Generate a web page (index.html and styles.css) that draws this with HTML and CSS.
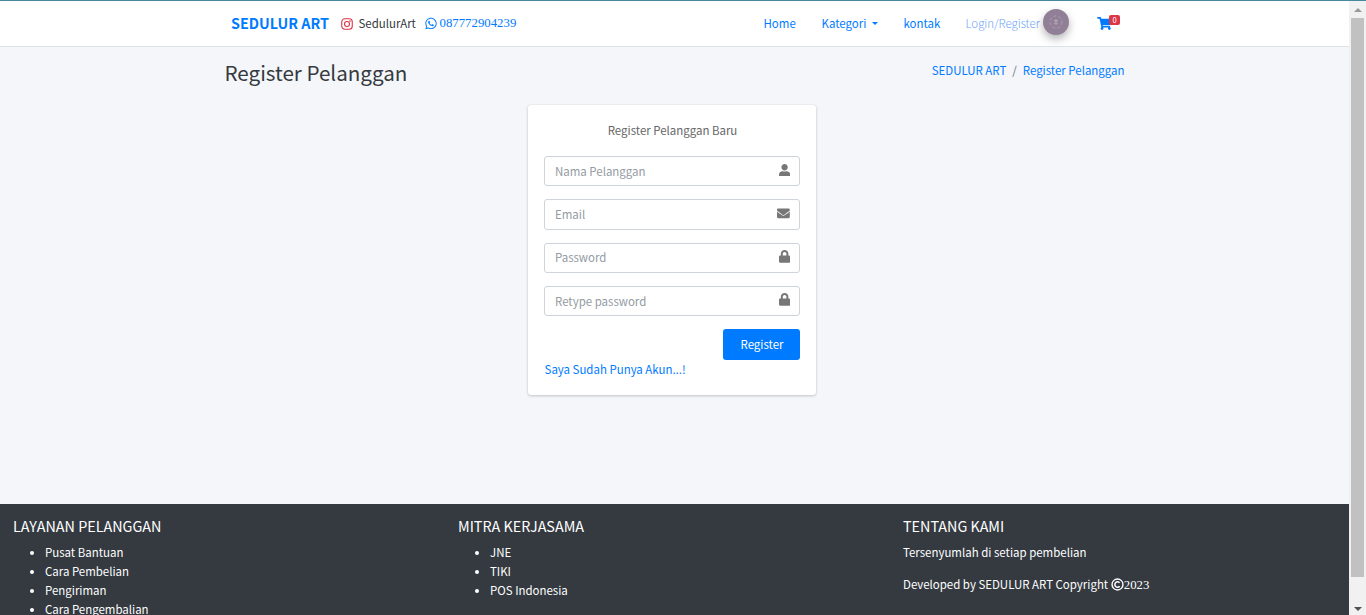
FILE: index.html
```html
<!DOCTYPE html>
<html lang="id">
<head>
<meta charset="utf-8">
<title>Register Pelanggan</title>
<link rel="stylesheet" href="styles.css">
</head>
<body>
<div class="page">
  <header class="navbar">
    <div class="container nav-row">
      <a class="brand">SEDULUR ART</a>
      <svg class="ig" viewBox="0 0 24 24" fill="none" stroke="#dc3545" stroke-width="2.2"><rect x="1.5" y="1.5" width="21" height="21" rx="6"/><circle cx="12" cy="12" r="5"/><circle cx="18" cy="6" r="1" fill="#dc3545" stroke-width="1"/></svg>
      <span class="handle">SedulurArt</span>
      <a class="phone"><svg class="wa" viewBox="0 0 448 512" fill="currentColor"><path d="M380.9 97.1C339 55.1 283.2 32 223.9 32c-122.400 0-222 99.600-222 222 0 39.100 10.200 77.300 29.600 111L0 480l117.700-30.900c32.400 17.700 68.900 27 106.100 27h.1c122.300 0 224.100-99.600 224.100-222 0-59.300-25.200-115-67.100-157zm-157 341.600c-33.200 0-65.700-8.900-94-25.700l-6.700-4-69.800 18.300L72 359.200l-4.400-7c-18.500-29.400-28.200-63.300-28.200-98.200 0-101.700 82.800-184.500 184.600-184.500 49.300 0 95.600 19.200 130.400 54.100 34.800 34.900 56.200 81.200 56.100 130.500 0 101.800-84.900 184.600-186.600 184.600zm101.200-138.200c-5.500-2.800-32.800-16.200-37.900-18-5.100-1.900-8.800-2.800-12.500 2.800-3.700 5.600-14.300 18-17.600 21.800-3.200 3.700-6.500 4.200-12 1.400-32.600-16.300-54-29.100-75.500-66-5.700-9.800 5.700-9.100 16.300-30.300 1.800-3.700.9-6.900-.5-9.700-1.400-2.800-12.500-30.100-17.100-41.200-4.500-10.800-9.100-9.300-12.500-9.500-3.200-.2-6.900-.2-10.600-.2-3.700 0-9.700 1.400-14.800 6.900-5.100 5.600-19.400 19-19.400 46.300 0 27.300 19.900 53.700 22.600 57.400 2.800 3.700 39.100 59.700 94.800 83.800 35.200 15.200 49 16.500 66.600 13.900 10.700-1.600 32.800-13.400 37.400-26.400 4.600-13 4.600-24.100 3.200-26.400-1.300-2.500-5-3.900-10.500-6.600z"/></svg><span>087772904239</span></a>
      <nav class="menu">
        <a>Home</a>
        <a class="drop">Kategori<i class="caret"></i></a>
        <a>kontak</a>
        <a class="login">Login/Register</a>
        <span class="avatar"><svg viewBox="0 0 26 26" fill="none" stroke="#b5a6ba"><circle cx="13" cy="13" r="6" stroke-dasharray="3 2" stroke-width=".7"/><path d="M11 11.500h4M13 10v6M11 15l2-2 2 2" stroke-width="1"/></svg></span>
        <a class="cart"><svg viewBox="0 0 576 512" fill="currentColor"><path d="M528.100 301.300l47.300-208C578.800 78.300 567.400 64 552 64H159.200l-9.200-44.800C147.800 8 137.900 0 126.500 0H24C10.700 0 0 10.700 0 24v16c0 13.300 10.700 24 24 24h69.900l70.200 343.400C147.300 417.100 136 435.200 136 456c0 30.900 25.100 56 56 56s56-25.100 56-56c0-15.700-6.400-29.800-16.800-40h209.600C430.400 426.200 424 440.300 424 456c0 30.900 25.100 56 56 56s56-25.100 56-56c0-22.200-12.900-41.300-31.600-50.400l5.500-24.300c3.400-15-8-29.300-23.400-29.300H218.100l-6.500-32h293.100c11.200 0 20.900-7.800 23.400-18.700z"/></svg><span class="badge">0</span></a>
      </nav>
    </div>
  </header>

  <div class="container heading">
    <h1>Register Pelanggan</h1>
    <div class="crumbs"><a>SEDULUR ART</a><span>/</span><a>Register Pelanggan</a></div>
  </div>

  <main class="card">
    <p class="card-title">Register Pelanggan Baru</p>
    <div class="field"><span>Nama Pelanggan</span><svg class="i-user" viewBox="0 0 448 512"><path d="M224 256c70.700 0 128-57.300 128-128S294.700 0 224 0 96 57.300 96 128s57.300 128 128 128zm89.600 32h-16.700c-22.200 10.200-46.900 16-72.900 16s-50.600-5.800-72.900-16h-16.700C60.200 288 0 348.200 0 422.400V464c0 26.500 21.500 48 48 48h352c26.500 0 48-21.500 48-48v-41.600c0-74.200-60.200-134.400-134.400-134.400z"/></svg></div>
    <div class="field"><span>Email</span><svg class="i-mail" viewBox="0 0 512 512"><path d="M502.300 190.800c3.900-3.100 9.700-.2 9.700 4.700V400c0 26.500-21.500 48-48 48H48c-26.500 0-48-21.500-48-48V195.600c0-5 5.700-7.800 9.700-4.700 22.400 17.400 52.100 39.500 154.100 113.600 21.100 15.400 56.700 47.800 92.200 47.600 35.700.3 72-32.800 92.300-47.600 102-74.100 131.600-96.300 154-113.700zM256 320c23.200.4 56.600-29.200 73.400-41.400 132.700-96.300 142.800-104.700 173.400-128.700 5.800-4.500 9.200-11.500 9.200-18.900v-19c0-26.500-21.500-48-48-48H48c-26.500 0-48 21.500-48 48v19c0 7.400 3.400 14.300 9.200 18.900 30.600 23.900 40.700 32.400 173.400 128.700 16.800 12.200 50.200 41.800 73.400 41.400z"/></svg></div>
    <div class="field"><span>Password</span><svg class="i-lock" viewBox="0 0 448 512"><path d="M400 224h-24v-72C376 68.200 307.800 0 224 0S72 68.200 72 152v72H48c-26.500 0-48 21.500-48 48v192c0 26.500 21.500 48 48 48h352c26.500 0 48-21.500 48-48V272c0-26.500-21.500-48-48-48zm-104 0H152v-72c0-39.700 32.300-72 72-72s72 32.300 72 72v72z"/></svg></div>
    <div class="field"><span>Retype password</span><svg class="i-lock" viewBox="0 0 448 512"><path d="M400 224h-24v-72C376 68.200 307.800 0 224 0S72 68.200 72 152v72H48c-26.500 0-48 21.500-48 48v192c0 26.500 21.500 48 48 48h352c26.500 0 48-21.500 48-48V272c0-26.500-21.500-48-48-48zm-104 0H152v-72c0-39.700 32.300-72 72-72s72 32.300 72 72v72z"/></svg></div>
    <button class="submit">Register</button>
    <a class="have">Saya Sudah Punya Akun...!</a>
  </main>

  <footer class="footer">
    <section><h2>LAYANAN PELANGGAN</h2><ul><li>Pusat Bantuan</li><li>Cara Pembelian</li><li>Pengiriman</li><li>Cara Pengembalian</li></ul></section>
    <section><h2>MITRA KERJASAMA</h2><ul><li>JNE</li><li>TIKI</li><li>POS Indonesia</li></ul></section>
    <section><h2>TENTANG KAMI</h2><p>Tersenyumlah di setiap pembelian</p><p>Developed by SEDULUR ART Copyright <svg class="copy" viewBox="0 0 14 14" fill="none" stroke="#fff"><circle cx="7" cy="7" r="5.900" stroke-width="1.500"/><path d="M9.300 5.200A2.900 2.900 0 1 0 9.300 8.800" stroke-width="1.600"/></svg><span class="year">2023</span></p></section>
  </footer>
</div>
<div class="scrollbar"><i class="up"></i><i class="thumb"></i><i class="down"></i></div>
</body>
</html>
```

FILE: styles.css
```css
* { box-sizing: border-box; }
html, body { height: 100%; overflow: hidden; }
body {
  margin: 0;
  display: flex;
  border-top: 1px solid #44899c;
  background: #f4f6f9;
  color: #343a40;
  font: 11.46px/19px "Noto Sans CJK SC", "Noto Sans", sans-serif;
}
h1, h2, p, ul { margin: 0; padding: 0; font-weight: 400; }
a { color: #007bff; white-space: nowrap; }
svg { display: block; flex: none; }
.page { width: 1349px; height: 614px; display: flex; flex-direction: column; overflow: hidden; flex: none; }
.container { width: 912px; margin: 0 auto; padding: 0 6px; display: flex; }

.navbar { height: 46px; flex: none; background: #fff; border-bottom: 1px solid #dee2e6; }
.nav-row { height: 45px; align-items: center; }
.brand { width: 109px; padding-left: 6.600px; margin-top: -2px; font-size: 14.35px; font-weight: 700; }
.ig { width: 12px; height: 12px; margin-left: 7px; }
.handle { width: 66px; margin-left: 6px; color: #343a40; }
.phone { display: flex; align-items: center; gap: 3px; font-family: "Liberation Serif", serif; font-size: 12.8px; }
.wa { width: 12px; height: 13px; }
.menu { display: flex; align-items: center; margin-left: auto; width: 361px; flex: none; }
.menu > a:first-child { width: 58px; }
.menu .drop { width: 82px; display: flex; align-items: center; }
.menu > a:nth-child(3) { width: 62px; }
.caret { margin-left: 6px; border: 3.500px solid transparent; border-top-color: #007bff; border-bottom: 0; }
.menu .login { width: 77px; font-weight: 300; color: #6da3f8; }
.avatar { width: 26px; height: 26px; margin-top: -4px; border-radius: 50%; background: #917f98; box-shadow: 0 4px 8px rgba(0, 0, 0, .3); flex: none; }
.cart { position: relative; margin-left: 28.500px; }
.cart svg { width: 15px; height: 13px; }
.badge { position: absolute; left: 12px; top: -2px; width: 11px; height: 10px; border-radius: 2px; background: #dc3545; color: #fff; font-size: 7.5px; line-height: 10px; text-align: center; }

.heading { height: 58px; flex: none; justify-content: space-between; }
h1 { margin-top: 11px; font-size: 20.6px; line-height: 28px; }
.crumbs { display: flex; margin-top: 14px; }
.crumbs span { margin: 0 6px; color: #6c757d; }

.card { width: 288px; height: 290px; flex: none; margin-left: 528px; padding: 16px; display: flex; flex-direction: column; background: #fff; border-radius: 3px; box-shadow: 0 0 1px rgba(0, 0, 0, .13), 0 1px 3px rgba(0, 0, 0, .2); }
.card-title { padding-left: 1px; text-align: center; color: #666; margin-bottom: 16px; }
.field { height: 30.4px; margin-bottom: 12.900px; padding: 0 9px 0 10px; flex: none; display: flex; align-items: center; justify-content: space-between; border: 1px solid #ced4da; border-radius: 3px; color: #939ba2; }
.field svg { fill: #777; margin-top: -2.500px; }
.i-user, .i-lock { width: 11.2px; height: 12.8px; }
.i-mail { width: 12.8px; height: 12.8px; }
.submit { align-self: flex-end; width: 77px; height: 31px; flex: none; padding: 0 0 0 1px; border: 0; border-radius: 3px; background: #007bff; color: #fff; font: 400 11.46px/31px "Noto Sans CJK SC", sans-serif; }
.have { padding-left: .6px; line-height: 19px; }

.footer { margin-top: auto; height: 111px; flex: none; padding: 11px 13px 0; display: grid; grid-template-columns: 445px 445px 1fr; background: #343a40; color: #fff; }
.footer h2 { font-size: 14.35px; line-height: 22px; margin-bottom: 6px; }
.footer ul { padding-left: 32px; }
.footer p { margin-bottom: 13px; }
.copy { display: inline-block; width: 13px; height: 13px; vertical-align: -2px; }
.year { font: 12.8px/1 "Liberation Serif", serif; }

.scrollbar { flex: 1; display: flex; flex-direction: column; align-items: center; background: #f1f1f1; }
.up { margin-top: 7px; border: 4px solid transparent; border-top: 0; border-bottom-color: #999; }
.thumb { margin-top: 6px; width: 13px; height: 559px; background: #c1c1c1; }
.down { margin-top: auto; margin-bottom: 4px; border: 4px solid transparent; border-bottom: 0; border-top-color: #505050; }
```
